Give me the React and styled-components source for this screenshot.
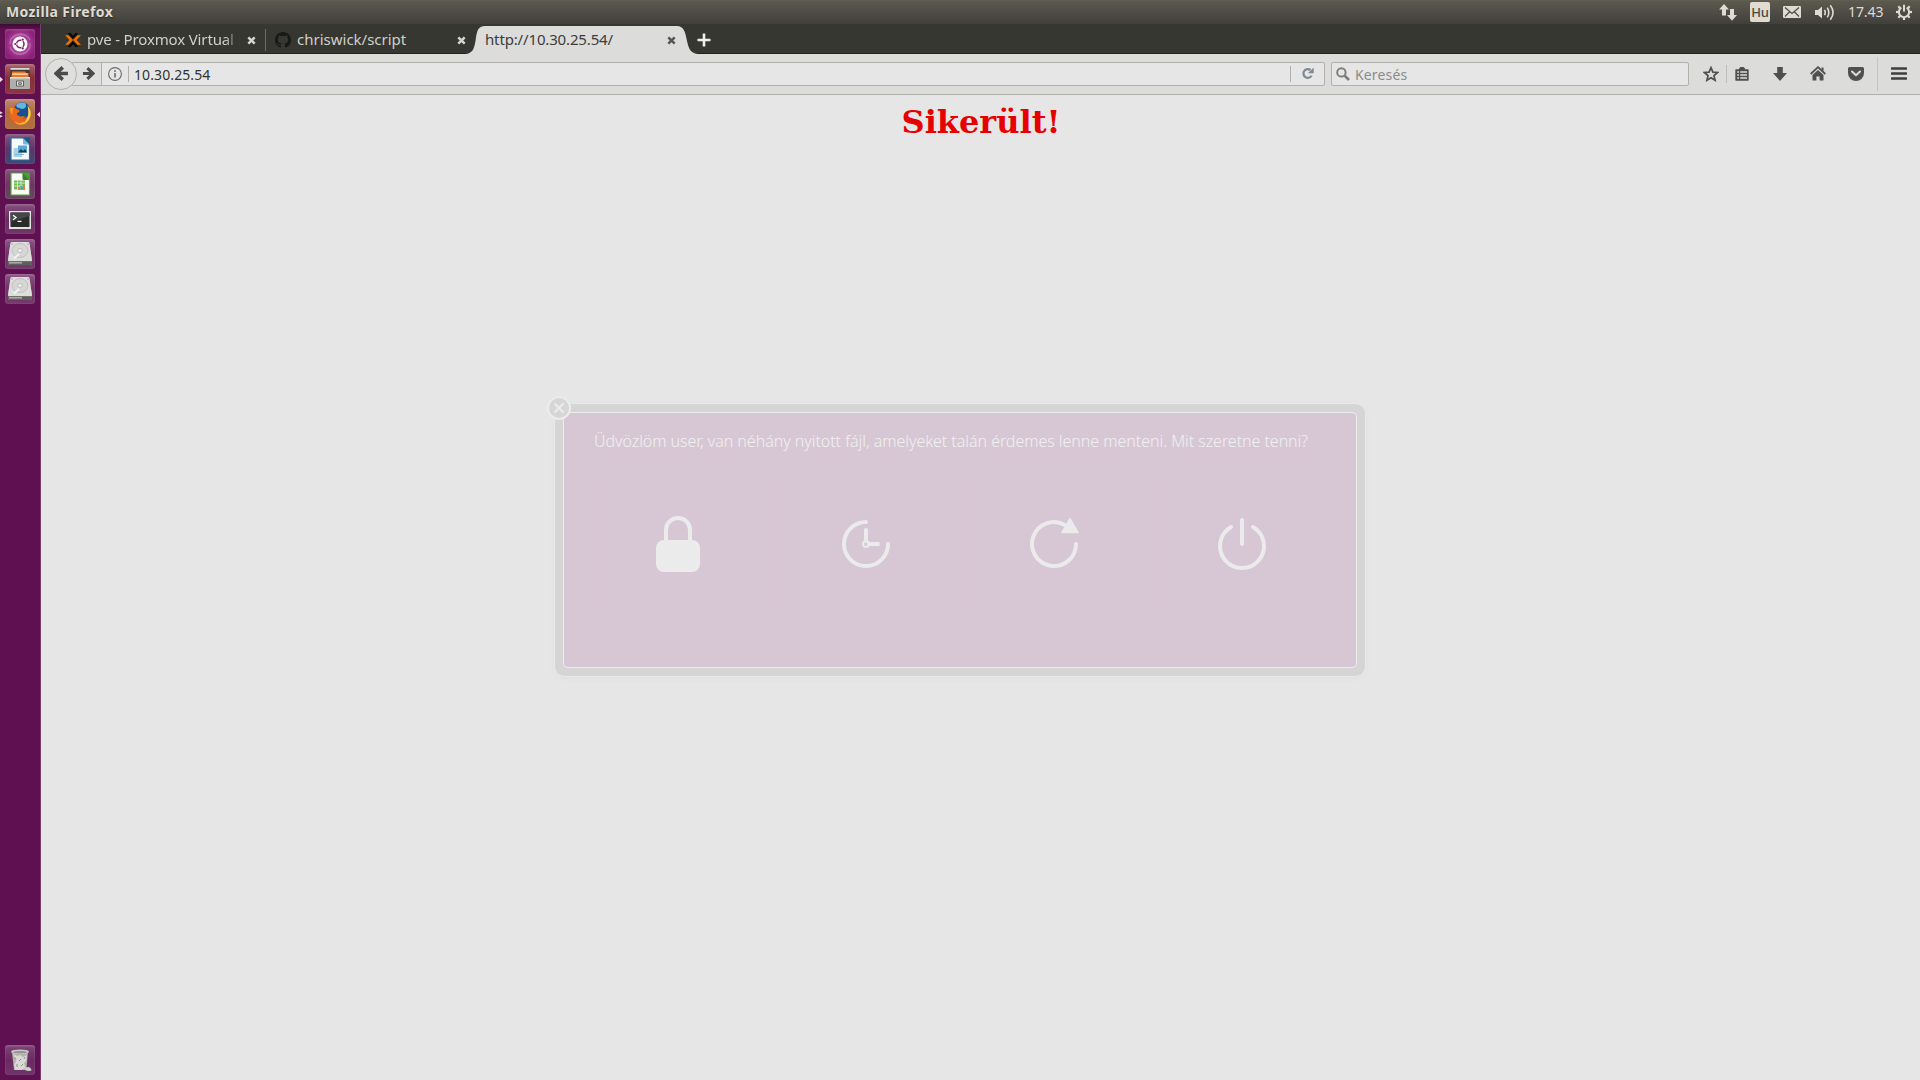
import React from "react";
import styled, { createGlobalStyle, css } from "styled-components";

const Global = createGlobalStyle`
  html, body { margin: 0; height: 100%; overflow: hidden; background: #e6e6e6; }
  * { box-sizing: border-box; }
  svg { display: block; flex: none; }
`;

const ui = css`font-family: "Noto Sans", "Open Sans", sans-serif;`;

const Desktop = styled.div`
  ${ui}
  display: flex;
  flex-direction: column;
  width: 1920px;
  height: 1080px;
`;

/* ---- top panel ---- */
const Panel = styled.header`
  flex: none;
  height: 24px;
  display: flex;
  align-items: center;
  justify-content: space-between;
  padding: 0 8px 0 6px;
  color: #dfdbd2;
  background: linear-gradient(#66624f 0, #5c5950 1px, #403f3a 24px);
`;
const PanelTitle = styled.span`
  font-weight: 700;
  font-size: 14px;
  line-height: 24px;
  letter-spacing: ${(p) => p.$track || 0}px;
  text-shadow: 0 1px 1px #2c2b28;
`;
const Indicators = styled.div`
  display: flex;
  align-items: center;
`;
const Slot = styled.div`
  width: ${(p) => p.$w}px;
  margin-right: ${(p) => p.$gap || 0}px;
  display: flex;
  justify-content: center;
`;
const Keyboard = styled.span`
  width: 20px;
  height: 20px;
  margin-right: 13px;
  border-radius: 2px;
  background: #dfdbd2;
  color: #4a4843;
  font-size: 13px;
  font-weight: 500;
  line-height: 20px;
  text-align: center;
  letter-spacing: -0.3px;
`;
const Clock = styled.span`
  width: 36px;
  margin-right: 12px;
  font-size: 14px;
  line-height: 24px;
  white-space: nowrap;
  letter-spacing: -0.1px;
`;

/* ---- launcher ---- */
const Workspace = styled.div`
  flex: 1;
  display: flex;
  min-height: 0;
`;
const Launcher = styled.nav`
  flex: none;
  width: 41px;
  padding: 5px 0;
  display: flex;
  flex-direction: column;
  gap: 5px;
  background: linear-gradient(#3c0a33 0, #5f1050 5px);
  border-right: 1px solid #7b3a70;
`;
const LauncherRow = styled.div`
  display: flex;
  align-items: center;
  height: 30px;
  margin-top: ${(p) => (p.$last ? "auto" : 0)};
`;
const Pip = styled.span`
  flex: none;
  width: 5px;
  display: flex;
  justify-content: ${(p) => (p.$right ? "flex-end" : "flex-start")};
`;
const Tile = styled.div`
  flex: none;
  width: 30px;
  height: 30px;
  border-radius: 3px;
  background: ${(p) => p.$bg};
  box-shadow: inset 0 0 0 1px rgba(255, 255, 255, 0.05), inset 0 2px 2px rgba(255, 255, 255, 0.1);
`;

/* ---- browser ---- */
const Browser = styled.main`
  flex: 1;
  display: flex;
  flex-direction: column;
`;
const TabStrip = styled.div`
  flex: none;
  display: flex;
  align-items: stretch;
  height: 30px;
  padding-left: 24px;
  background: #373731;
  box-shadow: inset 0 -1px #22221f;
`;
const Tab = styled.div`
  width: ${(p) => p.$w}px;
  display: flex;
  align-items: center;
  color: #d0cfca;
  font-size: 15px;
`;
const Favicon = styled.span`
  width: 16px;
  margin: 2px 6px 0 0;
`;
const TabLabel = styled.span`
  flex: 1;
  overflow: hidden;
  white-space: nowrap;
  line-height: 30px;
  letter-spacing: ${(p) => p.$track || 0}px;
  word-spacing: ${(p) => p.$words || 0}px;
  ${(p) => p.$fade && "mask-image: linear-gradient(90deg, #000 90%, rgba(0,0,0,.25) 97%, transparent 100%);"}
`;
const CloseSlot = styled.span`
  width: 9px;
  margin: 2px ${(p) => p.$end}px 0 7px;
`;
const TabRule = styled.i`
  width: 1px;
  height: 22px;
  margin: 5px 9px 0 0;
  background: #6c6b65;
`;
const TabCurve = styled.span`
  width: 20px;
  margin-left: ${(p) => p.$pull || 0}px;
  padding-top: 2px;
`;
const ActiveTab = styled.div`
  width: 192px;
  margin-top: 2px;
  display: flex;
  align-items: center;
  background: #dcdcda;
  color: #3d3d3b;
  font-size: 15px;
`;
const ActiveLabel = styled(TabLabel)`
  margin-top: -2px;
`;
const ActiveClose = styled(CloseSlot)`
  margin-top: 0;
`;
const NewTab = styled.span`
  display: flex;
  align-items: center;
  padding: 2px 0 0 0;
`;

const Toolbar = styled.div`
  flex: none;
  display: flex;
  align-items: center;
  height: 41px;
  padding: 0 13px 1px 4px;
  background: #dcdcda;
  border-bottom: 1px solid #b1b0ac;
`;
const BackButton = styled.div`
  flex: none;
  width: 32px;
  height: 32px;
  border: 1px solid #b1b0ac;
  border-radius: 50%;
  display: flex;
  align-items: center;
  justify-content: center;
  background: #dfdfdd;
  z-index: 1;
`;
const UrlField = styled.div`
  width: 1253px;
  height: 24px;
  margin-left: -5px;
  display: flex;
  align-items: center;
  border: 1px solid #b1b0ac;
  border-radius: 0 2px 2px 0;
  background: #e6e6e6;
`;
const ForwardCell = styled.span`
  width: 29px;
  height: 22px;
  padding-left: 9px;
  display: flex;
  align-items: center;
  background: #dfdfdd;
  border-right: 1px solid #b1b0ac;
`;
const Rule = styled.i`
  flex: none;
  width: 1px;
  height: ${(p) => p.$h}px;
  margin: ${(p) => p.$m || 0};
  background: ${(p) => p.$c || "#b1b0ac"};
`;
const InfoCell = styled.span`
  padding: 0 6px 0 6px;
`;
const Address = styled.span`
  flex: 1;
  padding: 2px 0 0 5px;
  color: #33332f;
  font-size: 14px;
  line-height: 22px;
  letter-spacing: 0.1px;
`;
const ReloadCell = styled.span`
  width: 33px;
  display: flex;
  justify-content: center;
`;
const SearchField = styled.div`
  width: 358px;
  height: 24px;
  margin-left: 6px;
  padding-left: 4px;
  display: flex;
  align-items: center;
  gap: 5px;
  border: 1px solid #b1b0ac;
  border-radius: 2px;
  background: #e6e6e6;
`;
const SearchHint = styled.span`
  padding-top: 2px;
  color: #8b8b89;
  font-size: 14px;
  line-height: 22px;
  letter-spacing: 0.15px;
`;
const Tools = styled.div`
  flex: 1;
  display: flex;
  align-items: center;
  padding-left: 14px;
`;

const Page = styled.section`
  flex: 1;
  padding: 9px 0 0 1px;
  background: #e6e6e6;
`;
const Heading = styled.h1`
  margin: 0;
  text-align: center;
  font: 700 32px/37px "DejaVu Serif", serif;
  color: #e60000;
`;

/* ---- session dialog over the desktop ---- */
const Overlay = styled.div`
  position: fixed;
  inset: 0;
  display: flex;
  align-items: center;
  justify-content: center;
`;
const Dialog = styled.div`
  ${ui}
  position: relative;
  width: 810px;
  height: 272px;
  padding: 8px;
  border-radius: 9px;
  background: #d5d5d5;
  box-shadow: 0 0 0 1px #e9e9e9, 0 2px 8px rgba(0, 0, 0, 0.03);
`;
const DialogBody = styled.div`
  height: 256px;
  padding: 15px 30px 0;
  border: 1px solid #ececec;
  border-radius: 5px;
  background: #d7c7d5;
`;
const Message = styled.p`
  margin: 0 0 5px;
  height: 27px;
  font-size: 16px;
  line-height: 27px;
  font-weight: 300;
  color: #f0f0ee;
  white-space: nowrap;
  letter-spacing: -0.04px;
`;
const Actions = styled.div`
  display: flex;
  gap: 20px;
`;
const Action = styled.div`
  flex: none;
  width: 168px;
  height: 168px;
  display: flex;
  align-items: center;
  justify-content: center;
  border: 1px solid #d9c8d1;
  border-radius: 16px;
`;
const DialogClose = styled.div`
  position: absolute;
  left: -8px;
  top: -8px;
`;

const Cross = ({ c }) => (
  <svg width="9" height="9" viewBox="0 0 9 9">
    <path d="M1.3 1.3L7.7 7.7M7.7 1.3L1.3 7.7" stroke={c} strokeWidth="2.5" />
  </svg>
);
const Arrow = ({ back, s = 14, c = "#4b4b49" }) => (
  <svg width={s} height={s} viewBox="0 0 14 14">
    <path
      d={back ? "M13 7H3M8.2 1.3L2 7L8.2 12.7" : "M1 7H11M5.8 1.3L12 7L5.8 12.7"}
      fill="none" stroke={c} strokeWidth="3.3"
    />
  </svg>
);
const Drive = () => (
  <svg width="30" height="30" viewBox="0 0 30 30">
    <path d="M5.5 4Q6 3 7 3H23Q24 3 24.4 4L27 21V25Q27 26 26 26H4Q3 26 3 25V21Z" fill="#a3a3a1" />
    <path d="M5.5 4Q6 3 7 3H23Q24 3 24.4 4L27 21Q27 22 26 22H4Q3 22 3 21Z" fill="#dededc" />
    <path d="M3 22.2H27V25Q27 26 26 26H4Q3 26 3 25Z" fill="#5f5f5d" />
    <path d="M4 23H17V24.6H4Z" fill="#a9a9a7" />
    <ellipse cx="15" cy="11.5" rx="8" ry="7" fill="#d6d6d4" stroke="#c0c0be" />
    <ellipse cx="15" cy="11.5" rx="2.3" ry="2" fill="#eee" stroke="#b4b4b2" strokeWidth=".8" />
    <path d="M9 19.5L14 15" stroke="#f3f3f3" strokeWidth="2" />
    <circle cx="7" cy="5" r=".7" fill="#999" /><circle cx="23" cy="5" r=".7" fill="#999" />
  </svg>
);

const apps = [
  {
    bg: "radial-gradient(circle, #c46cb4 0, #a33a91 45%, #8b2179 75%)",
    icon: (
      <svg width="30" height="30" viewBox="0 0 30 30">
        <path d="M5 15C5 7 13 3 20 6M25 14C26 22 18 27 10 24M8 9C12 4 22 4 25 11M5 18C8 26 17 27 22 23" fill="none" stroke="#d696ca" strokeWidth="1.4" opacity=".5" />
        <circle cx="15" cy="15" r="7.5" fill="#fff" />
        <circle cx="15.3" cy="15" r="3.7" fill="none" stroke="#7d1f6d" strokeWidth="1.5" />
        <path d="M12.6 15H9.2M16.6 12.7L18.3 9.8M16.6 17.3L18.3 20.2" stroke="#fff" strokeWidth="1.6" />
        <g fill="#7d1f6d"><circle cx="10.2" cy="15" r="1.1" /><circle cx="17.8" cy="10.6" r="1.1" /><circle cx="17.8" cy="19.4" r="1.1" /></g>
      </svg>
    ),
  },
  {
    left: 1,
    bg: "linear-gradient(#a86070, #87303c 45%, #8d3541)",
    icon: (
      <svg width="30" height="30" viewBox="0 0 30 30">
        <path d="M5.5 4H24.5L25 14H5Z" fill="#4a3a34" />
        <path d="M5.5 4H24.5V5.8H5.5Z" fill="#d9d9d5" />
        <path d="M7 7.5H20L21 9H23.5V13H6.5Z" fill="#e8772a" />
        <path d="M7.5 9.3H22.5V11H7.2Z" fill="#fbc99a" />
        <path d="M5 13H25V24Q25 25 24 25H6Q5 25 5 24Z" fill="#aeaeaa" />
        <path d="M5 13H25V14.5H5Z" fill="#e4e4e0" />
        <path d="M11.5 17H18.5V22H11.5Z" fill="#f1f1ee" stroke="#5b5b59" />
        <path d="M13.5 18.8H16.5V20.3H13.5Z" fill="none" stroke="#5b5b59" />
      </svg>
    ),
  },
  {
    left: 2,
    right: true,
    bg: "linear-gradient(#bf8870, #ad6b43 45%, #b2703f)",
    icon: (
      <svg width="30" height="30" viewBox="0 0 30 30">
        <circle cx="15" cy="15.3" r="10.5" fill="#e4601b" />
        <path d="M8 19Q14 25.5 20 22Q25.5 18 24.2 8.5Q26.8 13 25.3 18Q23 25.5 15 25.8Q9.5 25 8 19Z" fill="#f9b82a" />
        <circle cx="17" cy="11.5" r="8.2" fill="#17508f" />
        <path d="M11 6Q15 2.4 20 4Q22 6 20.5 8.5Q18 11 14.5 9Q11.5 9 11 6Z" fill="#5fb7e6" />
        <path d="M4.6 7.2Q5.5 9.2 8.5 8.8Q11 8.6 12 10.6Q14.8 10.6 14.6 12Q14 13.4 11.8 14.2Q12.2 17 15.5 17.4Q18.5 17 20.5 17.6Q18 21 13.5 20.6Q17 23.6 22 21Q18 25 13 24Q5 21.5 4.5 15Z" fill="#ea6a1d" />
        <path d="M4.8 9.5Q6.5 9.5 8.5 8.8Q6.5 12 7.5 16Q5.5 14 4.8 9.5Z" fill="#f8a12a" />
        <path d="M22.5 6.5Q26 10 25.2 16Q24.5 21 20 23.5Q23.5 18 23.3 13Q23.3 9 22.5 6.5Z" fill="#fbd34c" />
      </svg>
    ),
  },
  {
    bg: "linear-gradient(#875080, #5e3568 50%, #3f4a75)",
    icon: (
      <svg width="30" height="30" viewBox="0 0 30 30">
        <path d="M6 4H18L24.5 10.5V26H6Z" fill="#f5f9fb" stroke="#1f6f9c" strokeWidth="1.2" />
        <path d="M17 3.4H25V11.4Z" fill="#1b5c86" /><path d="M18 4L24.5 10.5H19Q18 10.5 18 9.5Z" fill="#78b8dc" />
        <path d="M8.5 14H17V23H8.5Z" fill="#a7d2e8" />
        <path d="M13 11.5H22V18.5H13Z" fill="#5aa9d3" /><path d="M13 18.5L16 15L18 17L20 15L22 18.5Z" fill="#143e57" />
        <path d="M10 20.5H19" stroke="#79b8d9" />
      </svg>
    ),
  },
  {
    bg: "linear-gradient(#865080, #6f3563 50%, #674861)",
    icon: (
      <svg width="30" height="30" viewBox="0 0 30 30">
        <path d="M6 4H18L24.5 10.5V26H6Z" fill="#fbfcf9" stroke="#58a63c" strokeWidth="1.2" />
        <path d="M16.5 3.4H25V11.9Z" fill="#44a32e" /><path d="M17.5 4L24.5 11H19Q17.5 11 17.5 9.5Z" fill="#3f7931" />
        <path d="M9 11.5H20V20.5H9Z" fill="#6bbd50" />
        <path d="M9 14H20M9 17H20M12.5 11.5V20.5M16 11.5V20.5" stroke="#e5f4df" strokeWidth=".8" />
        <path d="M14 21V18M19 21V16" stroke="#ef7c31" strokeWidth="2" /><path d="M16.5 21V17" stroke="#4b9bc7" strokeWidth="2" />
      </svg>
    ),
  },
  {
    bg: "linear-gradient(#865080, #6b2d62 50%, #71366a)",
    icon: (
      <svg width="30" height="30" viewBox="0 0 30 30">
        <path d="M4 7H26V25H4Z" fill="#e4e4e1" /><path d="M5.5 8.5H24.5V23H5.5Z" fill="#2b2d2d" />
        <path d="M5.5 8.5H24.5V12L5.5 18Z" fill="#454848" />
        <path d="M8 11.3L11 13.5L8 15.7M12.5 17.3H16.5" fill="none" stroke="#fff" strokeWidth="1.3" />
      </svg>
    ),
  },
  { bg: "linear-gradient(#8c5486, #74306a 50%, #743a6d)", icon: <Drive /> },
  { bg: "linear-gradient(#8c5486, #74306a 50%, #743a6d)", icon: <Drive /> },
  {
    last: true,
    bg: "linear-gradient(#7d4577, #6b2962 50%, #70346a)",
    icon: (
      <svg width="30" height="30" viewBox="0 0 30 30">
        <path d="M7 7H23L21.3 25H9Z" fill="#b3b2af" />
        <path d="M8 9L12 11L15 10L18 12L22 10L21 16L19 18L20.5 23L16 25H10L9 19L11 17Z" fill="#d9d8d4" />
        <path d="M9.5 12L11 15M16 14L14 16M18 19L16 21M20 12L19 14M12 19V22" stroke="#93918d" strokeWidth="1" />
        <ellipse cx="15" cy="6.8" rx="9" ry="2.4" fill="#c9c8c4" /><ellipse cx="15" cy="7.2" rx="6.8" ry="1.2" fill="#96948f" />
        <path d="M20 25Q20 22 23 22Q26 22 26.5 25.5Q23 26.5 20 25Z" fill="#cfceca" />
      </svg>
    ),
  },
];

const PipMark = ({ n, right }) => (
  <svg width="5" height="7" viewBox="0 0 5 7">
    {n === 1 && <path d="M0 .7L3 3.5L0 6.3Z" fill="#e8dbe5" />}
    {n === 2 && <path d="M0 .3L3 2L0 3ZM0 4L3 5L0 6.7Z" fill="#e8dbe5" />}
    {right && <path d="M5 .8L2 3.5L5 6.2Z" fill="#e8dbe5" />}
  </svg>
);

const gearTeeth = [45, 90, 135, 180, 225, 270, 315];

function TopPanel() {
  const c = "#dfdbd2";
  return (
    <Panel>
      <PanelTitle $track={0.38}>Mozilla Firefox</PanelTitle>
      <Indicators>
        <Slot $w={18} $gap={13}>
          <svg width="18" height="17" viewBox="0 0 18 17">
            <path d="M5 0L10 5.5H7V11.5H3V5.5H0ZM11 5H15V11H18L13 16.8L8 11H11Z" fill={c} />
          </svg>
        </Slot>
        <Keyboard>Hu</Keyboard>
        <Slot $w={18} $gap={14}>
          <svg width="18" height="12" viewBox="0 0 18 12">
            <rect width="18" height="12" rx="1" fill={c} />
            <path d="M2 1.5L9 7.5L16 1.5M2 10.5L6.5 6M16 10.5L11.5 6" fill="none" stroke="#4c4a44" strokeWidth="1.2" />
          </svg>
        </Slot>
        <Slot $w={20} $gap={13}>
          <svg width="20" height="17" viewBox="0 0 20 17">
            <path d="M0 6H3L7 2.5V14.5L3 11H0Z" fill={c} />
            <path d="M9.5 5.8Q11 8.5 9.5 11.2M12.3 3.6Q15.3 8.5 12.3 13.4M15.3 1.2Q20.8 8.5 15.3 15.8" fill="none" stroke={c} strokeWidth="1.6" />
          </svg>
        </Slot>
        <Clock>17.43</Clock>
        <svg width="16" height="16" viewBox="0 0 16 16">
          <path d="M5.3 3.7A5.1 5.1 0 1 0 10.7 3.7" fill="none" stroke={c} strokeWidth="2" />
          <path d="M8 .8V7.5" stroke={c} strokeWidth="2" />
          {gearTeeth.map((a) => (
            <path key={a} d="M8 0V2.6" stroke={c} strokeWidth="2.2" transform={`rotate(${a} 8 8)`} />
          ))}
        </svg>
      </Indicators>
    </Panel>
  );
}

function Tabs() {
  return (
    <TabStrip>
      <Tab $w={200}>
        <Favicon>
          <svg width="16" height="14" viewBox="0 0 16 14">
            <path d="M0 2.2H3.6L8 7L3.6 11.8H0L4.4 7ZM16 2.2H12.4L8 7L12.4 11.8H16L11.6 7Z" fill="#e57000" />
            <path d="M2.5 0H5.5L8 2.8L10.5 0H13.5L8 6ZM2.5 14H5.5L8 11.2L10.5 14H13.5L8 8Z" fill="#080808" />
          </svg>
        </Favicon>
        <TabLabel $fade $track={-0.12} $words={-0.2}>pve - Proxmox Virtual E</TabLabel>
        <CloseSlot $end={9}><Cross c="#d6d5d0" /></CloseSlot>
      </Tab>
      <TabRule />
      <Tab $w={201}>
        <Favicon>
          <svg width="16" height="16" viewBox="0 0 16 16">
            <path fill="#181818" d="M8 0C3.58 0 0 3.58 0 8c0 3.54 2.29 6.53 5.47 7.59.4.07.55-.17.55-.38 0-.19-.01-.82-.01-1.49-2.01.37-2.53-.49-2.69-.94-.09-.23-.48-.94-.82-1.13-.28-.15-.68-.52-.01-.53.63-.01 1.08.58 1.23.82.72 1.21 1.87.87 2.33.66.07-.52.28-.87.51-1.07-1.78-.2-3.64-.89-3.64-3.95 0-.87.31-1.59.82-2.15-.08-.2-.36-1.02.08-2.12 0 0 .67-.21 2.2.82a7.6 7.6 0 0 1 4 0c1.53-1.04 2.2-.82 2.2-.82.44 1.1.16 1.92.08 2.12.51.56.82 1.27.82 2.15 0 3.07-1.87 3.75-3.65 3.95.29.25.54.73.54 1.48 0 1.07-.01 1.93-.01 2.2 0 .21.15.46.55.38A8.01 8.01 0 0 0 16 8c0-4.42-3.58-8-8-8z" />
          </svg>
        </Favicon>
        <TabLabel>chriswick/script</TabLabel>
        <CloseSlot $end={10}><Cross c="#d6d5d0" /></CloseSlot>
      </Tab>
      <TabCurve $pull={-11}>
        <svg width="20" height="28" viewBox="0 0 20 28">
          <path d="M0 28C7 27.5 9 24 10.5 15C12 4 13 .5 20 0V28Z" fill="#dcdcda" />
        </svg>
      </TabCurve>
      <ActiveTab>
        <ActiveLabel $track={-0.15}>http://10.30.25.54/</ActiveLabel>
        <ActiveClose $end={1}><Cross c="#555552" /></ActiveClose>
      </ActiveTab>
      <TabCurve>
        <svg width="22" height="28" viewBox="0 0 22 28">
          <path d="M22 28C14 27.5 12 24 10 15C8 4 6 .5 0 0V28Z" fill="#dcdcda" />
        </svg>
      </TabCurve>
      <NewTab>
        <svg width="14" height="14" viewBox="0 0 14 14"><path d="M7 .5V13.5M.5 7H13.5" stroke="#efefed" strokeWidth="2.6" /></svg>
      </NewTab>
    </TabStrip>
  );
}

function NavBar() {
  const c = "#50504e";
  return (
    <Toolbar>
      <BackButton><Arrow back s={15} /></BackButton>
      <UrlField>
        <ForwardCell><Arrow s={13} /></ForwardCell>
        <InfoCell>
          <svg width="14" height="14" viewBox="0 0 14 14">
            <circle cx="7" cy="7" r="6.4" fill="none" stroke="#6c6c6a" strokeWidth="1.1" />
            <path d="M7 6V10.5M7 3.3V4.9" stroke="#6c6c6a" strokeWidth="1.6" />
          </svg>
        </InfoCell>
        <Rule $h={16} />
        <Address>10.30.25.54</Address>
        <Rule $h={16} />
        <ReloadCell>
          <svg width="12" height="13" viewBox="0 0 12 13">
            <path d="M9.6 8.8A4.4 4.4 0 1 1 8.5 3" fill="none" stroke="#7e8995" strokeWidth="2.2" />
            <path d="M11.7 .5V6.3H5.9Z" fill="#7e8995" />
          </svg>
        </ReloadCell>
      </UrlField>
      <SearchField>
        <svg width="14" height="14" viewBox="0 0 14 14">
          <circle cx="5.4" cy="5.4" r="4.2" fill="none" stroke="#7e7e7c" strokeWidth="2" />
          <path d="M8.5 8.5L13 13" stroke="#7e7e7c" strokeWidth="2.6" />
        </svg>
        <SearchHint>Keresés</SearchHint>
      </SearchField>
      <Tools>
        <svg width="16" height="16" viewBox="0 0 16 16">
          <path d="M8 1.7L9.9 6.1L14.6 6.5L11 9.6L12.1 14.3L8 11.8L3.9 14.3L5 9.6L1.4 6.5L6.1 6.1Z" fill="none" stroke={c} strokeWidth="1.7" />
        </svg>
        <Rule $h={18} $m="0 8px 0 7px" $c="#bdbdbb" />
        <svg width="14" height="14" viewBox="0 0 14 14">
          <path d="M1 3H4.5Q4.5 .5 7 .5Q9.5 .5 9.5 3H13V13H1Z" fill={c} stroke={c} strokeWidth="1.4" strokeLinejoin="round" />
          <path d="M2.2 5H4M5.2 5H12M2.2 8H4M5.2 8H12M2.2 11H4M5.2 11H12" stroke="#dcdcda" strokeWidth="1.5" />
        </svg>
        <Rule $h={1} $m="0 12px 0 11px" $c="transparent" />
        <svg width="14" height="14" viewBox="0 0 14 14"><path d="M4.2 0H9.8V6H14L7 14L0 6H4.2Z" fill={c} /></svg>
        <Rule $h={1} $m="0 11px 0 11px" $c="transparent" />
        <svg width="16" height="15" viewBox="0 0 16 15">
          <path d="M.7 8L8 1.2L15.3 8" fill="none" stroke={c} strokeWidth="1.8" />
          <path d="M8 4L13.5 9V14.5H9.6V10.5H6.4V14.5H2.5V9Z" fill={c} /><path d="M11.5 1.5H13.5V5.5L11.5 3.5Z" fill={c} />
        </svg>
        <Rule $h={1} $m="0 10px 0 11px" $c="transparent" />
        <svg width="16" height="14" viewBox="0 0 16 14">
          <path d="M1.5 0H14.5Q16 0 16 1.5V6A8 8 0 0 1 0 6V1.5Q0 0 1.5 0Z" fill={c} />
          <path d="M4 4.5L8 8.3L12 4.5" fill="none" stroke="#dcdcda" strokeWidth="2" strokeLinecap="round" strokeLinejoin="round" />
        </svg>
        <Rule $h={34} $m="0 13px 0 13px" $c="#c4c4c2" />
        <svg width="16" height="13" viewBox="0 0 16 13">
          <path d="M1 1.5H15M1 6.5H15M1 11.5H15" stroke="#3f3f3d" strokeWidth="2.6" strokeLinecap="round" />
        </svg>
      </Tools>
    </Toolbar>
  );
}

function SessionDialog() {
  const s = { fill: "none", stroke: "#ebebeb", strokeWidth: 4, strokeLinecap: "round" };
  return (
    <Overlay>
      <Dialog>
        <DialogBody>
          <Message>Üdvözlöm user, van néhány nyitott fájl, amelyeket talán érdemes lenne menteni. Mit szeretne tenni?</Message>
          <Actions>
            <Action>
              <svg width="64" height="64" viewBox="0 0 64 64">
                <path d="M20 30V18A12 12 0 0 1 44 18V30" {...s} />
                <rect x="10" y="28" width="44" height="32" rx="8" fill="#ebebeb" />
              </svg>
            </Action>
            <Action>
              <svg width="64" height="64" viewBox="0 0 64 64">
                <path d="M32 10A22 22 0 1 0 54 32M32 18V29M35 32H44" {...s} />
                <circle cx="32" cy="32" r="3" fill="none" stroke="#ebebeb" strokeWidth="2" />
              </svg>
            </Action>
            <Action>
              <svg width="64" height="64" viewBox="0 0 64 64">
                <path d="M54 32A22 22 0 1 1 43 13" {...s} />
                <path d="M48 6.5L56 20.5H40Z" fill="#ebebeb" stroke="#ebebeb" strokeWidth="1.5" strokeLinejoin="round" />
              </svg>
            </Action>
            <Action>
              <svg width="64" height="64" viewBox="0 0 64 64">
                <path d="M21 15A22 22 0 1 0 43 15M32 8V32" {...s} />
              </svg>
            </Action>
          </Actions>
        </DialogBody>
        <DialogClose>
          <svg width="24" height="24" viewBox="0 0 24 24">
            <circle cx="12" cy="12" r="11" fill="#d6d6d6" stroke="#ececec" strokeWidth="2" />
            <path d="M7.5 7.5L16.5 16.5M16.5 7.5L7.5 16.5" stroke="#ececec" strokeWidth="2" />
          </svg>
        </DialogClose>
      </Dialog>
    </Overlay>
  );
}

export default function App() {
  return (
    <>
      <Global />
      <Desktop>
        <TopPanel />
        <Workspace>
          <Launcher>
            {apps.map((a, i) => (
              <LauncherRow key={i} $last={a.last}>
                <Pip><PipMark n={a.left} /></Pip>
                <Tile $bg={a.bg}>{a.icon}</Tile>
                <Pip $right><PipMark right={a.right} /></Pip>
              </LauncherRow>
            ))}
          </Launcher>
          <Browser>
            <Tabs />
            <NavBar />
            <Page><Heading>Sikerült!</Heading></Page>
          </Browser>
        </Workspace>
      </Desktop>
      <SessionDialog />
    </>
  );
}
